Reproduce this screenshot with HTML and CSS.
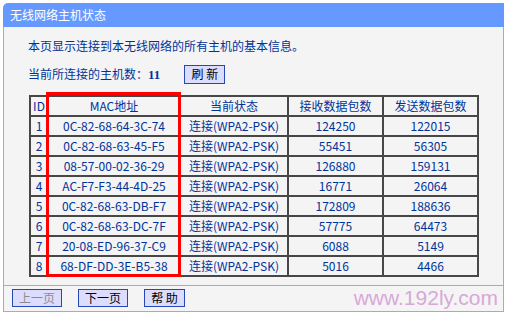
FILE: index.html
```html
<!DOCTYPE html>
<html lang="zh-CN">
<head>
    <meta charset="UTF-8">
    <title>无线网络主机状态</title>
    <link rel="stylesheet" href="styles.css">
</head>
<body>
    <div class="panel">
        <div class="panel-title">无线网络主机状态</div>
        <div class="panel-body">
            <p class="intro">本页显示连接到本无线网络的所有主机的基本信息。</p>
            <div class="count-row">
                <span>当前所连接的主机数：<b>11</b></span>
                <button class="btn btn-refresh">刷 新</button>
            </div>
            <div class="table-wrap">
                <table class="hosts">
                    <tr>
                        <th class="c-id">ID</th>
                        <th class="c-mac">MAC地址</th>
                        <th class="c-state">当前状态</th>
                        <th class="c-num">接收数据包数</th>
                        <th class="c-num">发送数据包数</th>
                    </tr>
                    <tr><td>1</td><td>0C-82-68-64-3C-74</td><td>连接(WPA2-PSK)</td><td>124250</td><td>122015</td></tr>
                    <tr><td>2</td><td>0C-82-68-63-45-F5</td><td>连接(WPA2-PSK)</td><td>55451</td><td>56305</td></tr>
                    <tr><td>3</td><td>08-57-00-02-36-29</td><td>连接(WPA2-PSK)</td><td>126880</td><td>159131</td></tr>
                    <tr><td>4</td><td>AC-F7-F3-44-4D-25</td><td>连接(WPA2-PSK)</td><td>16771</td><td>26064</td></tr>
                    <tr><td>5</td><td>0C-82-68-63-DB-F7</td><td>连接(WPA2-PSK)</td><td>172809</td><td>188636</td></tr>
                    <tr><td>6</td><td>0C-82-68-63-DC-7F</td><td>连接(WPA2-PSK)</td><td>57775</td><td>64473</td></tr>
                    <tr><td>7</td><td>20-08-ED-96-37-C9</td><td>连接(WPA2-PSK)</td><td>6088</td><td>5149</td></tr>
                    <tr><td>8</td><td>68-DF-DD-3E-B5-38</td><td>连接(WPA2-PSK)</td><td>5016</td><td>4466</td></tr>
                </table>
                <div class="highlight"></div>
            </div>
        </div>
        <div class="panel-foot">
            <button class="btn btn-page" disabled>上一页</button>
            <button class="btn btn-page">下一页</button>
            <button class="btn btn-help">帮 助</button>
            <span class="watermark">www.192ly.com</span>
        </div>
    </div>
</body>
</html>
```

FILE: styles.css
```css
body, html {
    margin: 0;
    padding: 0;
    background-color: #ffffff;
    font-family: "Noto Sans CJK SC", sans-serif;
    font-size: 12px;
    color: #003399;
}
.panel {
    margin: 3px 0 0 3px;
    width: 501px;
}
.panel-title {
    height: 24px;
    line-height: 24px;
    padding-left: 7px;
    background-color: #6699ff;
    color: #ffffff;
    border-radius: 5px 0 0 0;
}
.panel-body {
    background-color: #f4f4f4;
    border-left: 1px solid #ff9933;
    border-right: 1px solid #ff9933;
    border-bottom: 1px solid #ff9933;
    padding: 9px 0 8px 0;
}
.intro {
    margin: 0 0 0 24px;
    line-height: 20px;
}
.count-row {
    display: flex;
    align-items: center;
    height: 20px;
    margin: 8px 0 0 24px;
}
.count-row b {
    font-family: "Liberation Serif", serif;
    font-size: 13px;
}
.btn {
    font-family: "Noto Sans CJK SC", sans-serif;
    font-size: 12px;
    color: #000000;
    background-color: #dcdcff;
    border: 1px solid #2548b4;
    padding: 0;
    height: 18px;
    line-height: 16px;
}
.btn-refresh {
    width: 41px;
    height: 19px;
    margin-left: 24px;
}
.table-wrap {
    position: relative;
    margin: 11px 0 0 25px;
    width: 450px;
}
.hosts {
    table-layout: fixed;
    width: 450px;
    border-collapse: separate;
    border-spacing: 0;
    border-top: 2px solid #474747;
    border-left: 2px solid #474747;
}
.hosts th,
.hosts td {
    box-sizing: border-box;
    height: 20px;
    padding: 0;
    line-height: 18px;
    text-align: center;
    font-weight: normal;
    border-right: 2px solid #474747;
    border-bottom: 2px solid #474747;
    white-space: nowrap;
}
.c-id { width: 18px; }
.c-mac { width: 132px; }
.c-state { width: 108px; }
.c-num { width: 95px; }
.highlight {
    position: absolute;
    left: 17px;
    top: -3px;
    width: 135px;
    height: 185px;
    box-sizing: border-box;
    border: 3px solid #ff0000;
}
.panel-foot {
    position: relative;
    background-color: #f4f4f4;
    border-left: 1px solid #ff9933;
    border-right: 1px solid #ff9933;
    border-bottom: 1px solid #ff9933;
    height: 25px;
    padding-left: 8px;
    display: flex;
    align-items: flex-start;
    gap: 16px;
}
.panel-foot .btn {
    margin-top: 3px;
}
.btn-page {
    width: 50px;
}
.btn-page:disabled {
    color: #8c8c8c;
}
.btn-help {
    width: 41px;
}
.watermark {
    position: absolute;
    right: 5px;
    top: 0;
    font-family: "Liberation Sans", Arial, sans-serif;
    font-size: 21px;
    line-height: 24px;
    color: #d8a8d8;
}
```
